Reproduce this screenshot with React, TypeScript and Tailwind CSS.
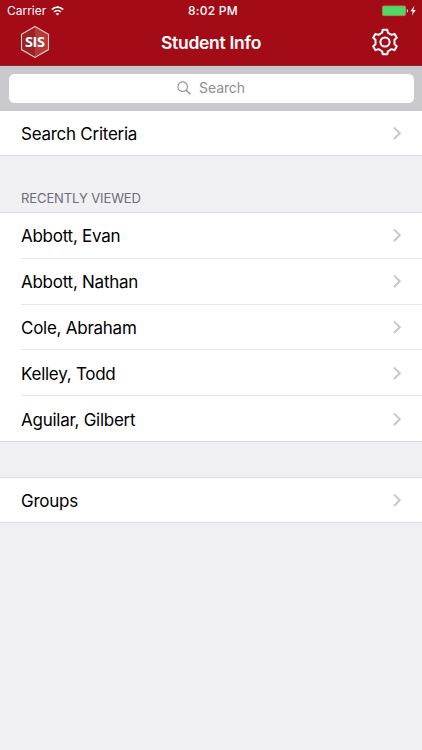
import React from 'react';

const recentStudents = [
  'Abbott, Evan',
  'Abbott, Nathan',
  'Cole, Abraham',
  'Kelley, Todd',
  'Aguilar, Gilbert',
];

// Outline of one gear tooth, pointing up from the centre
const tooth = [[-4.3, -8.5], [-2.9, -9.3], [-2.3, -12.3], [2.3, -12.3], [2.9, -9.3], [4.3, -8.5]];

const gearPoints = Array.from({ length: 6 }).flatMap((_, i) => {
  const a = (i * Math.PI) / 3;
  return tooth.map(([x, y]) =>
    `${(x * Math.cos(a) - y * Math.sin(a)).toFixed(2)},${(x * Math.sin(a) + y * Math.cos(a)).toFixed(2)}`
  );
}).join(' ');

const Chevron = () => (
  <svg viewBox="0 0 10 16" className="w-2.5 h-4 shrink-0">
    <path d="M2 2.4 L7.8 8.2 L2 14" fill="none" stroke="#c7c7cc" strokeWidth="2" />
  </svg>
);

const Row = ({ label }: { label: string }) => (
  <button className="w-full h-full flex items-center justify-between pr-5 text-left">
    <span className="text-[17px] leading-6 tracking-[-0.26px] text-black pt-0.5">{label}</span>
    <Chevron />
  </button>
);

const StatusBar = () => (
  <div className="h-[22px] relative flex items-center justify-between pl-[7px] pr-[5px] text-xs">
    <div className="flex items-center gap-[5px]">
      <span className="tracking-[-0.02px]">Carrier</span>
      <svg viewBox="0 0 13 10" className="w-[13px] h-2.5">
        <path d="M0.8 3.6 C4 0.3 9 0.3 12.2 3.6" fill="none" stroke="white" strokeWidth="1.7" />
        <path d="M3 6 C5 4.1 8 4.1 10 6" fill="none" stroke="white" strokeWidth="1.6" />
        <path d="M4.7 7.8 Q6.5 6.3 8.3 7.8 L6.5 9.6 Z" fill="white" />
      </svg>
    </div>
    <span className="absolute inset-x-0 text-center font-medium tracking-[0.25px] pl-[4px]">8:02 PM</span>
    <svg viewBox="0 0 36 12" className="w-9 h-3">
      <rect x="1.5" y="1" width="23" height="9.6" rx="1.2" fill="#4cd964" stroke="#a98a58" strokeWidth="0.9" />
      <path d="M25.8 3.8 Q28.2 5.8 25.8 7.8 Z" fill="white" />
      <path d="M33.3 0.8 L29.5 6.3 H31.8 L30.8 10.6 L34.8 5 H32.3 Z" fill="white" />
    </svg>
  </div>
);

const App = () => {
  return (
    <div className="w-full min-h-[750px] bg-[#efeff4] overflow-hidden font-['Inter',sans-serif]">
      {/* Navigation */}
      <header className="h-[66px] bg-[#a30b17] border-b border-[#8e2633] text-white">
        <StatusBar />
        <div className="h-10 relative flex items-center justify-between pl-5 pr-[23px]">
          <svg viewBox="0 0 30 34" className="w-[30px] h-[34px]">
            <path d="M15 1.5 L28.5 9.2 V24.6 L15 32.4 L1.5 24.6 V9.2 Z" fill="#b5383a" />
            <path d="M15 1.5 V32.4 L1.5 24.6 V9.2 Z" fill="#9c2226" />
            <path d="M15 1.5 L28.5 9.2 V24.6 L15 32.4 L1.5 24.6 V9.2 Z" fill="none" stroke="#f3cfcd" strokeWidth="1.1" />
            <text x="15" y="22.2" textAnchor="middle" fontSize="14.5" fontWeight="700" fill="white" fontFamily="'Open Sans', sans-serif" textLength="20">SIS</text>
          </svg>
          <h1 className="absolute inset-x-0 text-center text-[17.5px] font-semibold tracking-[-0.28px] pt-0.5">Student Info</h1>
          <svg viewBox="-14 -14 28 28" className="w-7 h-7 relative">
            <polygon points={gearPoints} fill="none" stroke="white" strokeWidth="2" strokeLinejoin="round" />
            <circle r="4.6" fill="none" stroke="white" strokeWidth="2" />
          </svg>
        </div>
      </header>

      {/* Search */}
      <div className="h-[45px] bg-[#c9c9ce] px-[8.5px] pt-[7.5px]">
        <div className="h-[29px] bg-white rounded-[5.5px] flex items-center justify-center gap-2 text-[#8e8e93]">
          <svg viewBox="0 0 14 14" className="w-3.5 h-3.5">
            <circle cx="5.7" cy="5.7" r="4.8" fill="none" stroke="currentColor" strokeWidth="1.1" />
            <path d="M9.2 9.2 L13.3 13.3" stroke="currentColor" strokeWidth="1.5" />
          </svg>
          <span className="text-sm tracking-[-0.1px] pb-px">Search</span>
        </div>
      </div>

      <div className="h-[45px] bg-white border-b border-[#dcdce0] pl-[21px]">
        <Row label="Search Criteria" />
      </div>

      {/* Recently viewed */}
      <h2 className="h-14 pl-[21px] pt-8 text-[13px] leading-5 tracking-[-0.1px] text-[#6d6d72]">RECENTLY VIEWED</h2>
      <ul className="h-[230px] bg-white border-y border-[#dcdce0] pl-[21px] flex flex-col divide-y divide-[#e5e5e8]">
        {recentStudents.map((name) => (
          <li key={name} className="flex-1">
            <Row label={name} />
          </li>
        ))}
      </ul>

      <div className="mt-[35px] h-[46px] bg-white border-y border-[#dcdce0] pl-[21px]">
        <Row label="Groups" />
      </div>
    </div>
  );
};

export default App;
